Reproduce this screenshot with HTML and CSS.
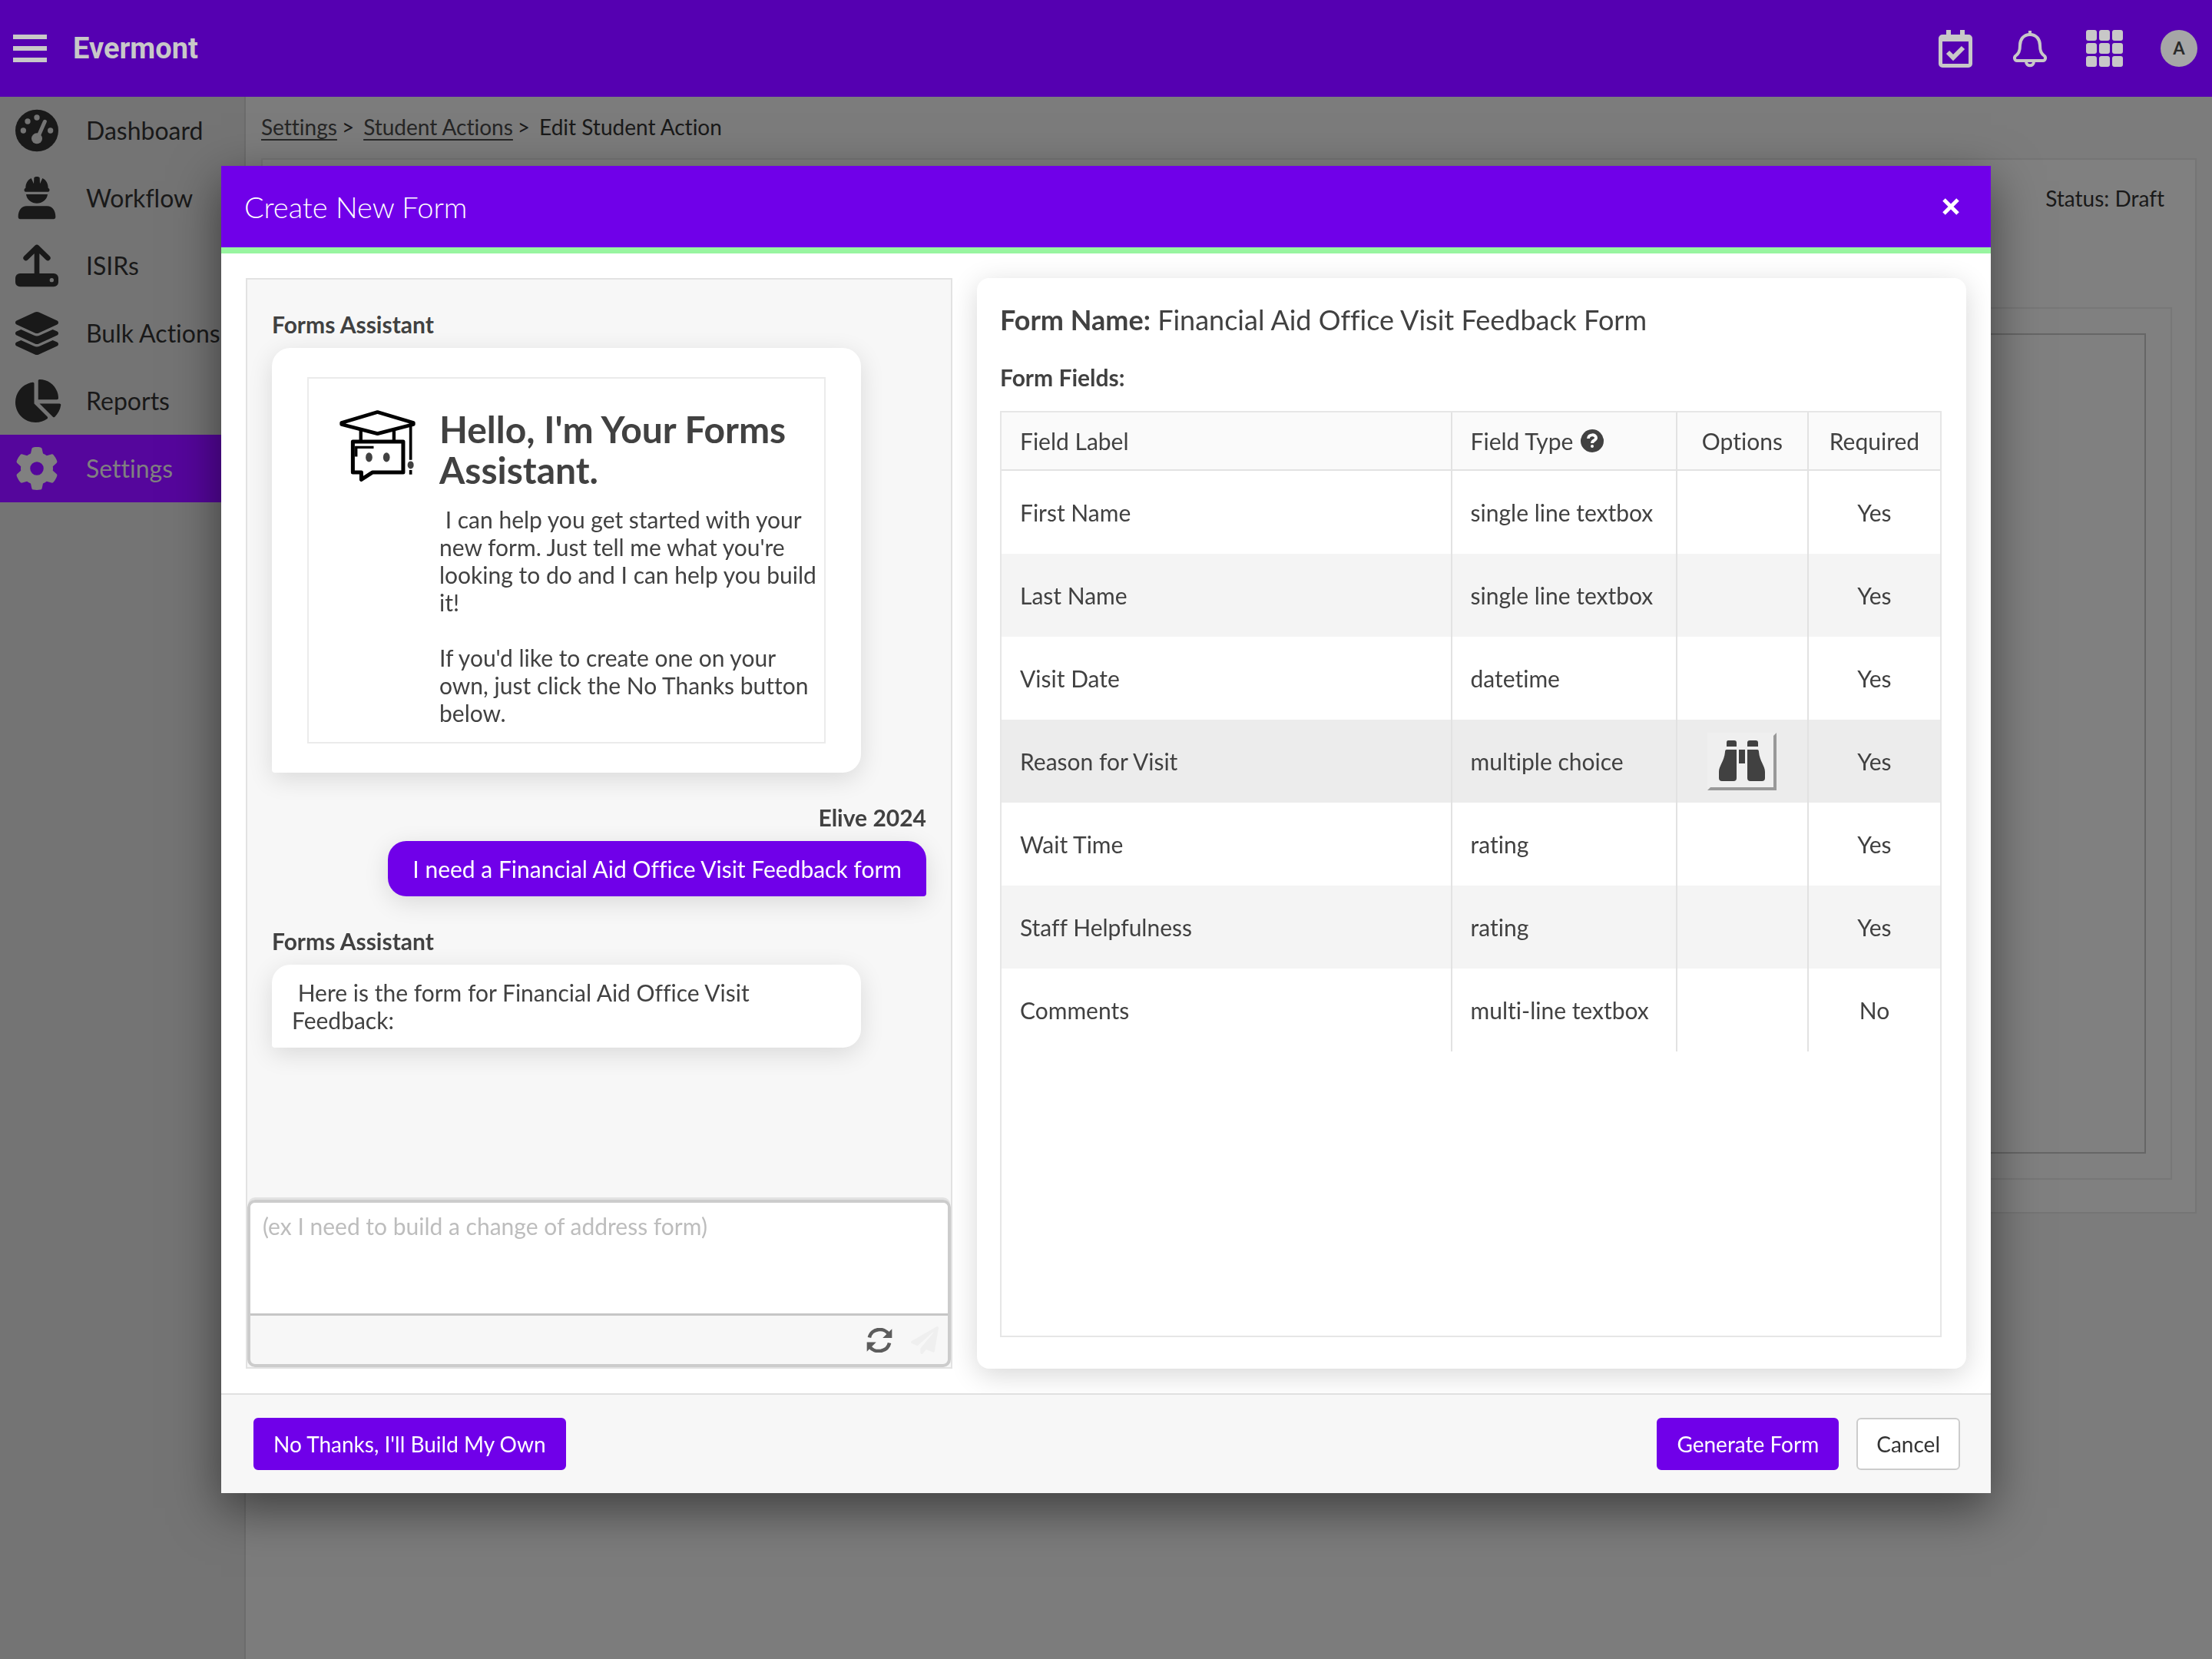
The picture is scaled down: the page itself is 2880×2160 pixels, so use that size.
FILE: index.html
```html
<!DOCTYPE html>
<html lang="en">

<head>
    <meta charset="UTF-8">
    <meta name="viewport" content="width=device-width, initial-scale=1.0">
    <title>Edit Student Action - Evermont</title>
    <link rel="stylesheet" href="styles.css">
</head>

<body>
    <header class="topbar">
        <button class="icon-btn menu-btn" aria-label="Menu">
            <svg width="44" height="36" viewBox="0 0 44 36"><path d="M0 0h44v6H0zM0 15h44v6H0zM0 30h44v6H0z"/></svg>
        </button>
        <span class="brand">Evermont</span>
        <div class="topbar-actions">
            <button class="icon-btn" aria-label="Tasks">
                <svg width="48" height="49" viewBox="0 0 48 49">
                    <path fill-rule="evenodd" d="M12 0h6v6h12V0h6v6h5a5 5 0 0 1 5 5v33a5 5 0 0 1-5 5H7a5 5 0 0 1-5-5V11a5 5 0 0 1 5-5h5zM7 15v29h34V15z"/>
                    <path class="line" stroke-width="6" d="M14 29l7 7 13-13"/>
                </svg>
            </button>
            <button class="icon-btn" aria-label="Notifications">
                <svg width="48" height="49" viewBox="0 0 48 49">
                    <path class="line" stroke-width="4" stroke-linejoin="round" d="M24 6C15 6 11 13 11 20c0 8-2 11-6 14-2 2-1 6 2 6h34c3 0 4-4 2-6-4-3-6-6-6-14 0-7-4-14-13-14z"/>
                    <path class="line" stroke-width="4" d="M24 1v6M19 41c0 7 10 7 10 0"/>
                </svg>
            </button>
            <button class="icon-btn" aria-label="Apps">
                <svg width="48" height="49" viewBox="0 0 48 49">
                    <rect x="0" y="0" width="14" height="14" rx="3"/><rect x="17" y="0" width="14" height="14" rx="3"/><rect x="34" y="0" width="14" height="14" rx="3"/>
                    <rect x="0" y="17" width="14" height="14" rx="3"/><rect x="17" y="17" width="14" height="14" rx="3"/><rect x="34" y="17" width="14" height="14" rx="3"/>
                    <rect x="0" y="34" width="14" height="14" rx="3"/><rect x="17" y="34" width="14" height="14" rx="3"/><rect x="34" y="34" width="14" height="14" rx="3"/>
                </svg>
            </button>
            <button class="avatar" aria-label="Account">A</button>
        </div>
    </header>

    <div class="page">
        <nav class="sidebar">
            <a href="#">
                <svg viewBox="0 0 192 168">
                    <ellipse cx="96" cy="84" rx="84" ry="82"/>
                    <g class="hole"><circle cx="96" cy="33" r="11"/><circle cx="60" cy="48" r="11"/><circle cx="43" cy="84" r="11"/><circle cx="149" cy="84" r="11"/><circle cx="96" cy="115" r="21"/></g>
                    <path class="hole-line" d="M127 49L101 108"/>
                </svg>
                Dashboard
            </a>
            <a href="#">
                <svg viewBox="0 0 192 168">
                    <path d="M85 4c5-5 17-5 22 0l1 24 10-22c14 7 22 20 22 38l4 3c3 4 1 12-4 12H52c-5 0-7-8-4-12l4-3c0-18 8-31 22-38l10 22zM54 69h84c-3 22-21 35-42 35S57 91 54 69zM57 115h78c22 0 34 18 34 42 0 6-3 9-8 9H31c-5 0-8-3-8-9 0-24 12-42 34-42z"/>
                </svg>
                Workflow
            </a>
            <a href="#">
                <svg viewBox="0 0 192 168">
                    <rect x="12" y="114" width="168" height="52" rx="18"/>
                    <circle class="hole" cx="154" cy="140" r="8"/>
                    <path class="hole-line" stroke-width="38" d="M96 100v16"/>
                    <path class="bar" d="M96 16v100M53 54l43-42 43 42"/>
                </svg>
                ISIRs
            </a>
            <a href="#">
                <svg viewBox="0 0 576 512"><path d="M264.500 5.200c14.900-6.900 32.100-6.900 47 0l218.600 101c8.500 3.900 13.900 12.400 13.900 21.800s-5.400 17.900-13.900 21.800l-218.600 101c-14.900 6.900-32.100 6.900-47 0L45.900 149.800C37.400 145.800 32 137.300 32 128s5.400-17.900 13.900-21.800L264.500 5.200zM476.900 209.600l53.200 24.600c8.500 3.900 13.900 12.400 13.900 21.800s-5.400 17.900-13.900 21.800l-218.600 101c-14.900 6.900-32.100 6.900-47 0L45.900 277.800C37.400 273.800 32 265.300 32 256s5.400-17.900 13.900-21.800l53.200-24.600 152 70.200c23.400 10.800 50.400 10.800 73.800 0l152-70.200zm-152 198.200l152-70.200 53.200 24.600c8.500 3.900 13.900 12.400 13.900 21.800s-5.400 17.900-13.900 21.800l-218.600 101c-14.900 6.900-32.100 6.900-47 0L45.900 405.800C37.400 401.800 32 393.300 32 384s5.400-17.900 13.900-21.800l53.200-24.600 152 70.200c23.400 10.800 50.400 10.800 73.800 0z"/></svg>
                Bulk Actions
            </a>
            <a href="#">
                <svg viewBox="0 0 576 512"><path d="M304 240V16.600c0-9 7-16.600 16-16.600C443.700 0 544 100.300 544 224c0 9-7.600 16-16.600 16H304zM32 272C32 150.700 122.100 50.300 239 34.300c9.200-1.300 17 6.100 17 15.400V288L412.500 444.500c6.700 6.700 6.200 17.700-1.500 23.100C371.800 495.600 323.800 512 272 512C139.500 512 32 404.600 32 272zm526.400 16c9.300 0 16.600 7.800 15.400 17c-7.700 55.900-34.600 105.600-73.900 142.300c-6 5.600-15.400 5.200-21.200-.7L320 288H558.400z"/></svg>
                Reports
            </a>
            <a href="#" class="active">
                <svg viewBox="0 0 512 512"><path d="M495.900 166.600c3.200 8.700 .5 18.400-6.400 24.600l-43.300 39.400c1.100 8.300 1.700 16.800 1.700 25.400s-.6 17.100-1.700 25.400l43.300 39.400c6.900 6.200 9.600 15.900 6.400 24.600c-4.400 11.900-9.700 23.300-15.800 34.300l-4.700 8.100c-6.600 11-14 21.400-22.100 31.200c-5.900 7.200-15.700 9.600-24.500 6.800l-55.700-17.700c-13.400 10.300-28.200 18.900-44 25.400l-12.500 57.100c-2 9.100-9 16.300-18.200 17.800c-13.800 2.300-28 3.500-42.500 3.500s-28.700-1.200-42.500-3.500c-9.200-1.500-16.200-8.700-18.200-17.800l-12.500-57.100c-15.800-6.500-30.600-15.100-44-25.400L83.100 425.900c-8.800 2.800-18.600 .3-24.500-6.800c-8.100-9.800-15.500-20.200-22.100-31.200l-4.700-8.100c-6.100-11-11.400-22.400-15.800-34.300c-3.200-8.700-.5-18.400 6.400-24.600l43.300-39.400C64.600 273.100 64 264.600 64 256s.6-17.100 1.700-25.400L22.400 191.200c-6.900-6.200-9.600-15.900-6.400-24.600c4.400-11.900 9.700-23.300 15.800-34.300l4.700-8.100c6.600-11 14-21.400 22.100-31.200c5.900-7.200 15.700-9.600 24.500-6.800l55.700 17.700c13.400-10.300 28.200-18.900 44-25.400l12.500-57.100c2-9.100 9-16.300 18.200-17.800C227.300 1.200 241.500 0 256 0s28.700 1.200 42.500 3.500c9.200 1.500 16.200 8.700 18.200 17.800l12.500 57.100c15.800 6.500 30.600 15.100 44 25.400l55.700-17.700c8.800-2.800 18.600-.3 24.500 6.800c8.100 9.800 15.500 20.200 22.100 31.200l4.700 8.100c6.100 11 11.400 22.400 15.800 34.300zM256 336a80 80 0 1 0 0-160 80 80 0 1 0 0 160z"/></svg>
                Settings
            </a>
        </nav>

        <main class="content">
            <div class="breadcrumb">
                <a href="#">Settings</a><span class="sep">&gt;</span>
                <a href="#">Student Actions</a><span class="sep">&gt;</span>
                <span>Edit Student Action</span>
            </div>
            <div class="panel">
                <p class="status">Status: Draft</p>
                <div class="editor">
                    <div class="canvas"></div>
                </div>
            </div>
        </main>
    </div>

    <div class="overlay">
        <div class="modal" role="dialog" aria-labelledby="modalTitle">
            <div class="modal-header">
                <h2 id="modalTitle">Create New Form</h2>
                <button class="icon-btn" aria-label="Close">
                    <svg width="22" height="22" viewBox="0 0 22 22"><path class="line" stroke-width="5" d="M2 2l18 18M20 2L2 20"/></svg>
                </button>
            </div>

            <div class="modal-body">
                <section class="chat">
                    <div class="messages">
                        <div class="message">
                            <strong>Forms Assistant</strong>
                            <div class="bubble intro">
                                <div class="intro-box">
                                    <svg class="bot" viewBox="38 38 296 292">
                                        <g fill="none" stroke="#000">
                                            <path stroke-width="14" stroke-linejoin="round" d="M186 48L46 90v6l140 36 140-36v-6z"/>
                                            <path stroke-width="13" d="M121 116v44M250 116v44"/>
                                            <path stroke-width="15" stroke-linejoin="round" d="M90 163h196v120H166l-43 28v-28H90z"/>
                                            <path stroke-width="10" d="M171 185h-68v36"/>
                                            <path stroke-width="11" d="M315 94v140M315 274v17"/>
                                        </g>
                                        <ellipse cx="153" cy="224" rx="13" ry="18"/>
                                        <ellipse cx="221" cy="224" rx="13" ry="18"/>
                                        <ellipse cx="315" cy="254" rx="12" ry="15"/>
                                    </svg>
                                    <div>
                                        <h1>Hello, I'm Your Forms Assistant.</h1>
                                        <p>&nbsp;I can help you get started with your new form. Just tell me what you're looking to do and I can help you build it!<br><br>If you'd like to create one on your own, just click the No Thanks button below.</p>
                                    </div>
                                </div>
                            </div>
                        </div>
                        <div class="message mine">
                            <strong>Elive 2024</strong>
                            <div class="bubble">I need a Financial Aid Office Visit Feedback form</div>
                        </div>
                        <div class="message">
                            <strong>Forms Assistant</strong>
                            <div class="bubble reply">&nbsp;Here is the form for Financial Aid Office Visit Feedback:</div>
                        </div>
                    </div>
                    <div class="composer">
                        <textarea aria-label="Message" placeholder="(ex I need to build a change of address form)"></textarea>
                        <div class="composer-tools">
                            <button class="icon-btn" aria-label="Start over">
                                <svg width="34" height="32" viewBox="50 84 104 98">
                                    <path d="M152 88v36h-37zM52 178v-37h37z"/>
                                    <path fill="none" stroke="#5c5c5c" stroke-width="14" d="M62 122c8-38 60-42 78-12M142 144c-8 38-60 42-79 14"/>
                                </svg>
                            </button>
                            <button class="icon-btn send" aria-label="Send" disabled>
                                <svg width="36" height="36" viewBox="0 0 512 512"><path d="M476 3.200L12.500 270.600c-18.100 10.400-15.800 35.600 2.200 43.200L121 358.400l287.300-253.200c5.500-4.900 13.300 2.600 8.600 8.300L176 407v80.500c0 23.600 28.500 32.900 42.500 15.800L282 426l124.600 52.200c14.200 6 30.400-2.900 33-18.200l72-432C515 7.800 493.300-6.800 476 3.200z"/></svg>
                            </button>
                        </div>
                    </div>
                </section>

                <section class="preview">
                    <p class="form-name"><strong>Form Name:</strong> Financial Aid Office Visit Feedback Form</p>
                    <p class="form-fields"><strong>Form Fields:</strong></p>
                    <div class="grid">
                        <table>
                            <thead>
                                <tr>
                                    <th class="col-label">Field Label</th>
                                    <th class="col-type">
                                        <div class="th-help">
                                            Field Type
                                            <svg width="30" height="30" viewBox="0 0 30 30">
                                                <circle cx="15" cy="15" r="15"/>
                                                <path fill="none" stroke="#fafafa" stroke-width="4" d="M10 12c0-6 10-6 10-1 0 4-5 3-5 7"/>
                                                <circle cx="15" cy="22" r="2" fill="#fafafa"/>
                                            </svg>
                                        </div>
                                    </th>
                                    <th class="center">Options</th>
                                    <th class="center">Required</th>
                                </tr>
                            </thead>
                            <tbody>
                                <tr><td>First Name</td><td>single line textbox</td><td></td><td class="center">Yes</td></tr>
                                <tr><td>Last Name</td><td>single line textbox</td><td></td><td class="center">Yes</td></tr>
                                <tr><td>Visit Date</td><td>datetime</td><td></td><td class="center">Yes</td></tr>
                                <tr class="hovered">
                                    <td>Reason for Visit</td>
                                    <td>multiple choice</td>
                                    <td class="center">
                                        <button class="options-btn" aria-label="View options">
                                            <svg width="60" height="53" viewBox="0 0 60 53"><path d="M12 0h8q3 0 3 3v5H10V3q0-3 2-3zM40 0h8q3 0 3 3v5H37V3q0-3 3-3zM10 12h13v37q0 4-4 4H4q-4 0-4-4v-8c0-8 7-14 8-26q0-3 2-3zM26 12h8v18h-8zM37 12h13q2 0 2 3c1 12 8 18 8 26v8q0 4-4 4H41q-4 0-4-4z"/></svg>
                                        </button>
                                    </td>
                                    <td class="center">Yes</td>
                                </tr>
                                <tr><td>Wait Time</td><td>rating</td><td></td><td class="center">Yes</td></tr>
                                <tr><td>Staff Helpfulness</td><td>rating</td><td></td><td class="center">Yes</td></tr>
                                <tr><td>Comments</td><td>multi-line textbox</td><td></td><td class="center">No</td></tr>
                            </tbody>
                        </table>
                    </div>
                </section>
            </div>

            <div class="modal-footer">
                <button class="btn primary">No Thanks, I'll Build My Own</button>
                <div class="footer-right">
                    <button class="btn primary">Generate Form</button>
                    <button class="btn">Cancel</button>
                </div>
            </div>
        </div>
    </div>
</body>

</html>
```
FILE: styles.css
```css
* {
    box-sizing: border-box;
}

body {
    font-family: Lato, sans-serif;
    font-size: 30px;
    font-variant-ligatures: no-common-ligatures;
    line-height: 36px;
    color: #414141;
    background: #7c7c7c;
    margin: 0;
    display: flex;
    flex-direction: column;
    min-height: 100vh;
}

h1,
h2,
p {
    margin: 0;
}

button,
textarea {
    font: inherit;
    color: inherit;
}

svg {
    display: block;
    fill: currentColor;
}

.line {
    fill: none;
    stroke: currentColor;
}

.icon-btn {
    background: none;
    border: none;
    padding: 0;
    cursor: pointer;
}

/* top bar */
.topbar {
    display: flex;
    align-items: center;
    height: 126px;
    padding: 0 19px 0 17px;
    background: #5500b1;
    color: #c8c8c8;
}

.brand {
    font-family: Roboto, sans-serif;
    font-size: 38px;
    font-weight: 700;
    margin-left: 34px;
}

.topbar-actions {
    display: flex;
    gap: 49px;
    margin-left: auto;
}

.avatar {
    width: 48px;
    height: 48px;
    border: none;
    border-radius: 50%;
    padding: 0;
    background: #a6a6a6;
    color: #2a2a2a;
    font-family: Roboto, sans-serif;
    font-size: 24px;
    font-weight: 500;
}

/* page behind the dialog */
.page {
    display: flex;
    flex: 1;
}

.sidebar {
    width: 320px;
    flex-shrink: 0;
    background: #747474;
    border-right: 2px solid #6c6c6c;
}

.sidebar a {
    display: flex;
    align-items: center;
    gap: 32px;
    height: 88px;
    padding-left: 16px;
    font-size: 32px;
    color: #191919;
    text-decoration: none;
    white-space: nowrap;
}

.sidebar svg {
    width: 64px;
    height: 56px;
}

.sidebar .hole {
    fill: #747474;
}

.sidebar .hole-line {
    fill: none;
    stroke: #747474;
    stroke-width: 15;
    stroke-linecap: round;
}

.sidebar .bar {
    fill: none;
    stroke: #191919;
    stroke-width: 20;
    stroke-linecap: round;
    stroke-linejoin: round;
}

.sidebar a.active {
    background: #55069c;
    color: #808080;
}

.content {
    flex: 1;
    padding: 21px 20px;
    color: #191919;
    font-size: 28px;
}

.breadcrumb {
    display: flex;
}

.breadcrumb a {
    color: #262626;
    text-underline-offset: 5px;
}

.breadcrumb .sep {
    margin: 0 12px 0 6px;
}

.panel {
    margin-top: 23px;
    padding: 32px 30px 42px;
    background: #808080;
    border: 2px solid #757575;
}

.status {
    text-align: right;
    padding-right: 10px;
}

.editor {
    margin-top: 124px;
    padding: 32px;
    border: 2px solid #777777;
}

.canvas {
    min-height: 1068px;
    border: 2px solid #666666;
}

/* dialog */
.overlay {
    position: fixed;
    inset: 0;
    display: flex;
    align-items: center;
    justify-content: center;
}

.modal {
    display: flex;
    flex-direction: column;
    width: 80%;
    height: 80%;
    background: #fff;
    box-shadow: 0 20px 60px rgba(0, 0, 0, 0.5);
}

.modal-header {
    display: flex;
    align-items: center;
    justify-content: space-between;
    height: 114px;
    padding: 0 41px 0 30px;
    background: #7000e9;
    border-bottom: 8px solid #98f5a0;
    color: #fff;
}

.modal-header h2 {
    font-size: 38px;
    font-weight: 300;
}

.modal-body {
    flex: 1;
    min-height: 0;
    display: grid;
    grid-template-columns: 5fr 7fr;
    gap: 32px;
    padding: 32px;
}

.chat {
    display: flex;
    flex-direction: column;
    min-height: 0;
    background: #f7f7f7;
    border: 2px solid #e2e2e2;
}

.messages {
    flex: 1;
    padding: 40px 32px;
}

.message {
    display: flex;
    flex-direction: column;
    align-items: flex-start;
    gap: 13px;
    margin-bottom: 40px;
}

.message.mine {
    align-items: flex-end;
}

.bubble {
    max-width: 90%;
    padding: 18px 32px;
    background: #fff;
    border-radius: 24px 24px 24px 4px;
    box-shadow: 0 8px 32px rgba(0, 0, 0, 0.12);
}

.mine .bubble {
    background: #7000e9;
    color: #fff;
    border-radius: 24px 24px 4px 24px;
}

.bubble.reply {
    width: 90%;
    padding: 18px 26px;
}

.bubble.intro {
    padding: 38px 46px;
}

.intro-box {
    display: flex;
    gap: 31px;
    padding: 39px 10px 20px 40px;
    border: 2px solid #ebebeb;
}

.bot {
    width: 99px;
    height: 100px;
    flex-shrink: 0;
}

.intro-box h1 {
    font-size: 48px;
    line-height: 53px;
    margin-bottom: 20px;
}

.composer {
    display: flex;
    flex-direction: column;
    border: 4px solid #cccccc;
    border-radius: 10px;
    box-shadow: 0 -4px 0 -1px #e2e2e2;
    overflow: hidden;
}

.composer textarea {
    height: 144px;
    padding: 12px 16px;
    border: none;
    background: #fff;
    resize: none;
    outline: none;
}

.composer textarea::placeholder {
    color: #bdbdbd;
}

.composer-tools {
    display: flex;
    align-items: center;
    justify-content: flex-end;
    gap: 24px;
    height: 66px;
    padding-right: 12px;
    border-top: 3px solid #c6c6c6;
    color: #5c5c5c;
}

.send {
    color: #efefef;
}

.preview {
    display: flex;
    flex-direction: column;
    min-height: 0;
    padding: 36px 32px 41px 30px;
    border-radius: 16px;
    background: #fff;
    box-shadow: 0 8px 36px rgba(0, 0, 0, 0.16);
}

.form-name {
    font-size: 36px;
}

.form-fields {
    margin-top: 39px;
}

.grid {
    flex: 1;
    margin-top: 26px;
    border: 2px solid #e6e6e6;
}

table {
    width: 100%;
    table-layout: fixed;
    border-collapse: separate;
    border-spacing: 0;
}

th,
td {
    padding: 0 24px;
    text-align: left;
    border-right: 2px solid #e2e2e2;
}

th:last-child,
td:last-child {
    border-right: none;
}

th {
    height: 76px;
    font-weight: 400;
    background: #fafafa;
    border-bottom: 2px solid #e2e2e2;
}

td {
    height: 108px;
}

.col-label {
    width: 48%;
}

.col-type {
    width: 24%;
}

.center {
    padding: 0;
    text-align: center;
}

.th-help {
    display: flex;
    align-items: center;
    gap: 10px;
}

tbody tr:nth-child(even) {
    background: #f4f4f4;
}

tbody tr.hovered {
    background: #ececec;
}

.options-btn {
    padding: 6px 11px 8px;
    border: 4px solid #efefef;
    border-right-color: #999999;
    border-bottom-color: #999999;
    background: #efefef;
    vertical-align: middle;
}

.modal-footer {
    display: flex;
    align-items: center;
    justify-content: space-between;
    height: 130px;
    padding: 0 40px 0 42px;
    background: #f7f7f7;
    border-top: 2px solid #e0e0e0;
}

.footer-right {
    display: flex;
    gap: 23px;
}

.btn {
    height: 68px;
    padding: 0 24px;
    font-size: 28px;
    color: #333;
    background: #fff;
    border: 2px solid #cccccc;
    border-radius: 6px;
    cursor: pointer;
}

.btn.primary {
    color: #fff;
    background: #7000e9;
    border-color: #7000e9;
}
```
